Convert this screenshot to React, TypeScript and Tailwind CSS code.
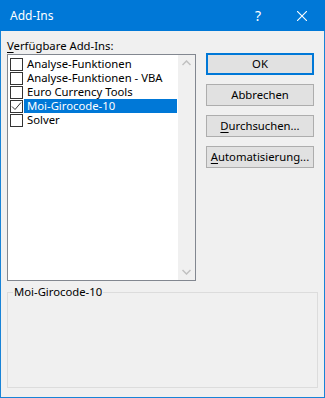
import React from 'react';

const items = [
  { label: 'Analyse-Funktionen', checked: false },
  { label: 'Analyse-Funktionen - VBA', checked: false },
  { label: 'Euro Currency Tools', checked: false },
  { label: 'Moi-Girocode-10', checked: true, selected: true },
  { label: 'Solver', checked: false },
];

function CheckBox({ checked }: { checked: boolean }) {
  return (
    <span className="flex h-[13px] w-[13px] shrink-0 items-center justify-center border border-[#333] bg-white">
      {checked && (
        <svg width="11" height="11" viewBox="0 0 11 11">
          <path d="M1 5.5 L4 8.5 L10 1.5" fill="none" stroke="#333" strokeWidth="1" />
        </svg>
      )}
    </span>
  );
}

function Button({ children, primary }: { children: React.ReactNode; primary?: boolean }) {
  return (
    <div
      className={`flex h-[22px] w-[108px] items-center justify-center bg-[#e1e1e1] text-[11.3px] leading-[14px] text-black ${
        primary ? 'border-2 border-[#0078d7]' : 'border border-[#adadad]'
      }`}
    >
      {children}
    </div>
  );
}

export default function App() {
  return (
    <div
      className="flex h-[398px] w-[325px] flex-col border-x border-b border-[#1883d7] bg-[#f0f0f0]"
      style={{ fontFamily: '"Noto Sans", "Liberation Sans", sans-serif' }}
    >
      {/* title bar */}
      <div className="-mx-px flex h-[31px] shrink-0 items-center bg-[#0078d7] pl-[10px] text-[12px] text-white">
        <span className="flex-1">Add-Ins</span>
        <span className="w-[20px] text-[14px]">?</span>
        <svg className="ml-[22px] mr-[18px]" width="10" height="10" viewBox="0 0 10 10">
          <path d="M0 0 L10 10 M10 0 L0 10" stroke="#fff" strokeWidth="1.1" />
        </svg>
      </div>

      <div className="flex pl-[6px] pt-[7px]">
        <div className="flex flex-col">
          <div className="h-[16px] text-[11.3px] leading-[16px] text-black">
            <span className="underline underline-offset-2">V</span>erfügbare Add-Ins:
          </div>
          <div className="flex h-[227px] w-[189px] border border-[#828790] bg-white">
            <div className="flex flex-1 flex-col pt-[2px]">
              {items.map((it) => (
                <div key={it.label} className="flex h-[14px] items-center pl-[2px]">
                  <CheckBox checked={it.checked} />
                  <span
                    className={`ml-px h-[14px] pl-[3px] text-[11.3px] leading-[14px] ${
                      it.selected ? 'w-[153px] bg-[#0078d7] text-white' : 'text-black'
                    }`}
                  >
                    {it.label}
                  </span>
                </div>
              ))}
            </div>
            <div className="flex w-[17px] flex-col items-center justify-between bg-[#f0f0f0] py-[5px]">
              <svg width="9" height="6" viewBox="0 0 9 6">
                <path d="M0.5 5 L4.5 1 L8.5 5" fill="none" stroke="#c0c0c0" strokeWidth="1.5" />
              </svg>
              <svg width="9" height="6" viewBox="0 0 9 6">
                <path d="M0.5 1 L4.5 5 L8.5 1" fill="none" stroke="#c0c0c0" strokeWidth="1.5" />
              </svg>
            </div>
          </div>
        </div>

        <div className="ml-[10px] flex flex-col gap-[9px] pt-[15px]">
          <Button primary>OK</Button>
          <Button>Abbrechen</Button>
          <Button>
            <span>
              <span className="underline underline-offset-2">D</span>urchsuchen...
            </span>
          </Button>
          <Button>
            <span>
              <span className="underline underline-offset-2">A</span>utomatisierung...
            </span>
          </Button>
        </div>
      </div>

      <div className="relative mx-[6px] mt-[11px] h-[96px] w-[311px] border border-[#dcdcdc]">
        <span className="absolute -top-[9px] left-[5px] bg-[#f0f0f0] px-px text-[11.3px] leading-[16px] text-black">
          Moi-Girocode-10
        </span>
      </div>
    </div>
  );
}
